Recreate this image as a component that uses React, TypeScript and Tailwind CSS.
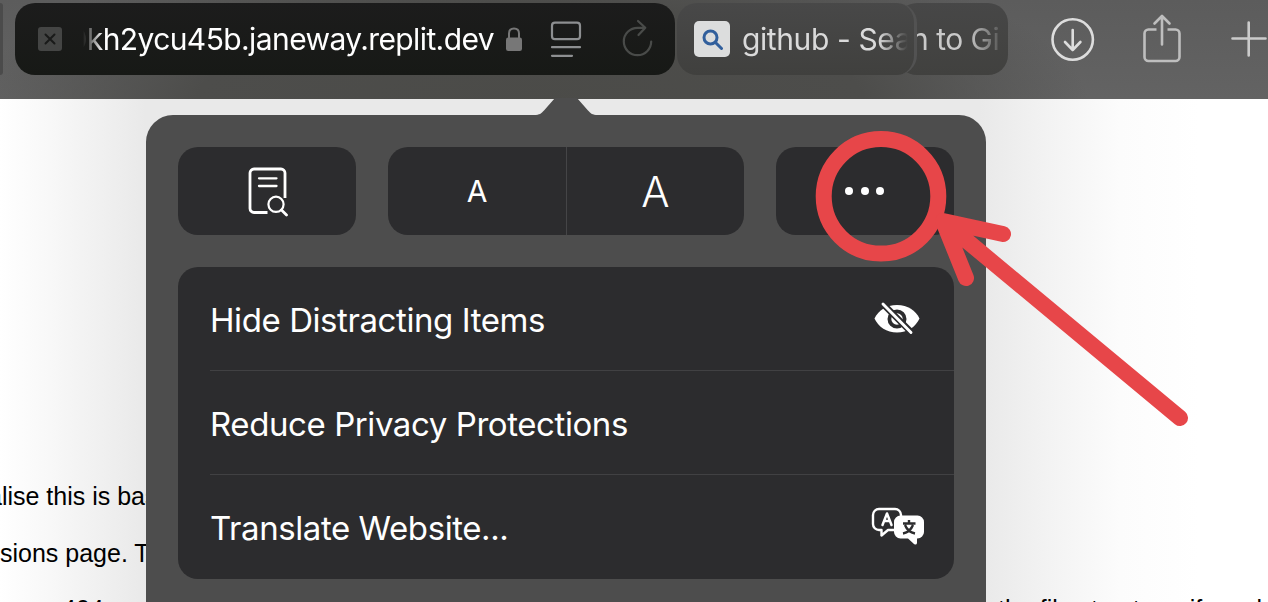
import type { ReactNode } from "react";

const ui = "font-['Inter','Liberation_Sans',sans-serif]";

function PageSettingsIcon() {
  return (
    <svg className="block h-[40px] w-[32px]" viewBox="0 0 32 40" fill="none" stroke="#8d8f91" strokeWidth="2.2" strokeLinecap="round">
      <rect x="2" y="3.700" width="28" height="16.5" rx="3" />
      <path d="M2 28.200h28M2 36.800h20" />
    </svg>
  );
}

function ReloadIcon() {
  return (
    <svg className="block h-[40px] w-[34px]" viewBox="0 0 34 40" fill="none" stroke="#494b49" strokeWidth="2.2" strokeLinecap="round" strokeLinejoin="round">
      <path d="M31.2 23.500A13.7 13.7 0 1 1 17.500 9.800H25M18 3L25.300 9.800L18.500 17" />
    </svg>
  );
}

function Lock() {
  return (
    <svg className="block h-[25px] w-[18px]" viewBox="0 0 18 25" fill="none">
      <path d="M4 12V6.5C4 3.5 6 1.5 9 1.5s5 2 5 5V12" stroke="#777" strokeWidth="2" />
      <rect x="1" y="10.5" width="16" height="13.5" rx="2.2" fill="#777" />
    </svg>
  );
}

function FindOnPage() {
  return (
    <svg className="ml-[2px] mt-[2px] block h-[50px] w-[40px]" viewBox="0 0 40 50" fill="none" stroke="white" strokeWidth="2.6" strokeLinecap="round">
      <path d="M20 45.500H6.5a4 4 0 0 1-4-4V6a4 4 0 0 1 4-4h27a4 4 0 0 1 4 4V31" strokeLinecap="butt" strokeWidth="2.8" transform="translate(-.5 0)" />
      <path d="M11 11.3h17.500M11 19h17.500" strokeWidth="2.3" />
      <circle cx="28" cy="37.3" r="7.6" strokeWidth="2.2" />
      <path d="M33.500 43l5 5" strokeWidth="2.8" />
    </svg>
  );
}

function HiddenEye() {
  return (
    <svg className="block h-[36px] w-[48px]" viewBox="0 0 48 36" fill="none">
      <path d="M1.500 17.500C5.500 9.500 13 4 24 4S42.500 9.500 46.500 17.500C42.500 26 34.500 31.500 24 31.500S5.500 26 1.500 17.500Z" fill="white" />
      <circle cx="24" cy="18" r="7.600" stroke="#2c2c2e" strokeWidth="3.800" />
      <path d="M8 1L40 33" stroke="#2c2c2e" strokeWidth="6.500" />
      <path d="M10 3L38 31.500" stroke="white" strokeWidth="2.900" strokeLinecap="round" />
    </svg>
  );
}

function TranslateIcon() {
  return (
    <svg className="block h-[40px] w-[54px]" viewBox="0 0 54 40" fill="none">
      <path d="M23 23H17L10.500 28.500V23H8a6 6 0 0 1-6-6V8a6 6 0 0 1 6-6h16a6 6 0 0 1 6 6v3" stroke="white" strokeWidth="2.400" strokeLinejoin="round" />
      <path d="M29.500 8.500h17a6.500 6.500 0 0 1 6.500 6.500v10a6.500 6.500 0 0 1-6.500 6.500H46v4.500q-.5 2.500-3 1l-6-5.500h-7.500A6.500 6.500 0 0 1 23 25V15a6.500 6.500 0 0 1 6.500-6.500Z" fill="white" />
      <path d="M11.500 18L16 6.500L20.500 18M13 14h6" stroke="white" strokeWidth="2.500" strokeLinecap="round" strokeLinejoin="round" />
      <path d="M38 13v3M32 16.500h12.500M34 18c2 5 5 7.500 10 8.500M42 18c-2 5-5 7.500-10 8.500" stroke="#2c2c2e" strokeWidth="2.400" />
    </svg>
  );
}

function MenuRow({ label, icon, last = false }: { label: string; icon?: ReactNode; last?: boolean }) {
  return (
    <div className="pl-8">
      <div className={`flex h-[104px] items-center justify-between pr-[29px] ${last ? "" : "border-b border-[#414143]"}`}>
        <span className="mt-[2px] whitespace-nowrap text-[33px] leading-[40px] tracking-[-0.42px] text-white">{label}</span>
        {icon}
      </div>
    </div>
  );
}

function Toolbar() {
  return (
    <header className="flex h-[99px] shrink-0 items-start overflow-hidden bg-[radial-gradient(ellipse_560px_180px_at_530px_110px,#4b4b48_0%,#4d4d4b_60%,transparent_100%),linear-gradient(#5c5c5c,#636363)] pt-[3px]">
      <div className="h-[72px] w-[3px] shrink-0 rounded-r-[6px] bg-[#4b4b4b]" />
      <div className="ml-3 flex h-[72px] w-[660px] shrink-0 items-center rounded-[20px] bg-gradient-to-b from-[#1c1c1c] to-[#171916] pl-[23px]">
        <div className="flex size-6 shrink-0 items-center justify-center rounded-[3px] bg-[#444544]">
          <svg className="size-3" viewBox="0 0 12 12" stroke="#191a19" strokeWidth="2" strokeLinecap="round"><path d="M1.500 1.500l9 9M10.500 1.500l-9 9" /></svg>
        </div>
        <div className="ml-[21px] flex w-[411px] shrink-0 justify-end overflow-hidden whitespace-nowrap text-[30px] leading-[38px] tracking-[-0.6px] text-white [mask-image:linear-gradient(90deg,transparent,black_20px)]">
          <span>0kh2ycu45b.janeway.replit.dev</span>
        </div>
        <div className="ml-[11px]"><Lock /></div>
        <div className="ml-[27px]"><PageSettingsIcon /></div>
        <div className="ml-[38px] mt-[-2px]"><ReloadIcon /></div>
      </div>
      <div className="relative z-10 ml-[2px] flex h-[72px] w-[240px] shrink-0 items-center overflow-hidden rounded-[20px] border-r-[3px] border-[#525252] bg-gradient-to-b from-[#484848] to-[#40403e] pl-[17px]">
        <div className="flex size-9 shrink-0 items-center justify-center rounded-[5px] bg-[#dcdddd]">
          <svg className="size-[21px]" viewBox="0 0 21 21" fill="none" stroke="#315f9c" strokeWidth="3"><circle cx="8.500" cy="8.500" r="6.500" /><path d="M13.500 13.500l6 6" strokeLinecap="round" /></svg>
        </div>
        <span className="ml-[12px] w-[166px] shrink-0 overflow-hidden whitespace-nowrap text-[30px] leading-[38px] tracking-[-0.4px] text-[#dadada] [mask-image:linear-gradient(90deg,black_82%,transparent_100%)]">github - Search</span>
      </div>
      <div className="-ml-5 flex h-[72px] w-[111px] shrink-0 items-center rounded-[20px] bg-gradient-to-b from-[#474747] to-[#41413f]">
        <span className="ml-[14px] w-[88px] overflow-hidden whitespace-nowrap text-[30px] leading-[38px] tracking-[-0.5px] text-[#c9c9c9] [mask-image:linear-gradient(90deg,black_65%,transparent_108%)]">n to Git</span>
      </div>
      <div className="ml-[43px] mt-[14px] flex shrink-0 text-[#d0d0d0]">
        <svg className="mt-[1px] h-[44px] w-[44px]" viewBox="0 0 44 44" fill="none" stroke="#dddddd" strokeWidth="2.600" strokeLinecap="round" strokeLinejoin="round"><circle cx="21.700" cy="21.500" r="20.200" /><path d="M21.700 12v20M14 24l7.700 8l7.700-8" /></svg>
        <svg className="-mt-[4px] ml-[47px] h-[52px] w-[40px]" viewBox="0 0 40 52" fill="none" stroke="#bebebe" strokeWidth="2.600" strokeLinecap="round" strokeLinejoin="round"><path d="M14.500 16.500H6.500a4 4 0 0 0-4 4v23.500a4 4 0 0 0 4 4h27a4 4 0 0 0 4-4V20.500a4 4 0 0 0-4-4h-8" strokeLinecap="butt" /><path d="M20 31.500V3M12.500 10.500l7.500-7.500l7.500 7.500" /></svg>
        <svg className="ml-[49px] mt-[4px] h-[36px] w-[36px]" viewBox="0 0 36 36" stroke="#cbcbcb" strokeWidth="2.600" strokeLinecap="round"><path d="M1.500 17.500h33M17.700 1.500v33" /></svg>
      </div>
    </header>
  );
}

function Popover() {
  return (
    <section className="absolute left-[146px] top-[115px] h-[487px] w-[840px] rounded-t-[27px] bg-[#4d4d4d] px-8 pt-8">
      <svg className="absolute -top-[17px] left-[386px] h-[18px] w-[70px]" viewBox="0 0 70 18"><path d="M2 17C8 17 9 15.500 12 12.500L23 0H45L56 12.500C59 15.500 60 17 66 17V18H2Z" fill="#4d4d4d" /></svg>
      <div className="flex h-[88px] gap-8">
        <button className="flex w-[178px] items-center justify-center rounded-[20px] bg-[#2c2c2e]"><FindOnPage /></button>
        <div className="flex w-[356px] overflow-hidden rounded-[20px] bg-[#2c2c2e] text-white">
          <button className="flex w-[179px] items-center justify-center border-r border-[#454547] text-[30px]">A</button>
          <button className="flex flex-1 items-center justify-center text-[42px] font-[360]">A</button>
        </div>
        <button className="flex w-[178px] items-center justify-center gap-[7.5px] rounded-[20px] bg-[#2c2c2e] pr-[1px]">
          <i className="size-[8px] rounded-full bg-white" /><i className="size-[8px] rounded-full bg-white" /><i className="size-[8px] rounded-full bg-white" />
        </button>
      </div>
      <div className="mt-8 h-[312px] rounded-[20px] bg-[#2c2c2e]">
        <MenuRow label="Hide Distracting Items" icon={<span className="mr-[4px]"><HiddenEye /></span>} />
        <MenuRow label="Reduce Privacy Protections" />
        <MenuRow label="Translate Website..." icon={<TranslateIcon />} last />
      </div>
    </section>
  );
}

export default function App() {
  return (
    <div className={`relative flex h-[602px] w-[1268px] flex-col overflow-hidden bg-white ${ui}`}>
      <Toolbar />
      <main className="flex flex-1 flex-col overflow-hidden bg-[linear-gradient(90deg,#fff_0px,#f8f8f8_50px,#e9e9e9_146px,#e9e9e9_980px,#f3f3f3_1050px,#fcfcfc_1120px,#fff_1200px)] pt-[382px] font-['Liberation_Sans',sans-serif] text-[25px] leading-[30px] text-black">
        <p className="-ml-[12px] whitespace-nowrap">alise this is based</p>
        <p className="mt-[27px] whitespace-nowrap">sions page. The</p>
        <div className="mt-[26px] flex whitespace-nowrap"><span className="ml-[62px] w-[936px] shrink-0">404</span><span>the file structure, if you look</span></div>
      </main>
      <Popover />
      <svg className="pointer-events-none absolute inset-0 h-[602px] w-[1268px]" viewBox="0 0 1268 602" fill="none" stroke="#e74649" strokeWidth="16" strokeLinecap="round" strokeLinejoin="round">
        <circle cx="881" cy="196.300" r="57.300" />
        <path d="M1180 418L943 221M1003 234L943 221L966 278" />
      </svg>
    </div>
  );
}
